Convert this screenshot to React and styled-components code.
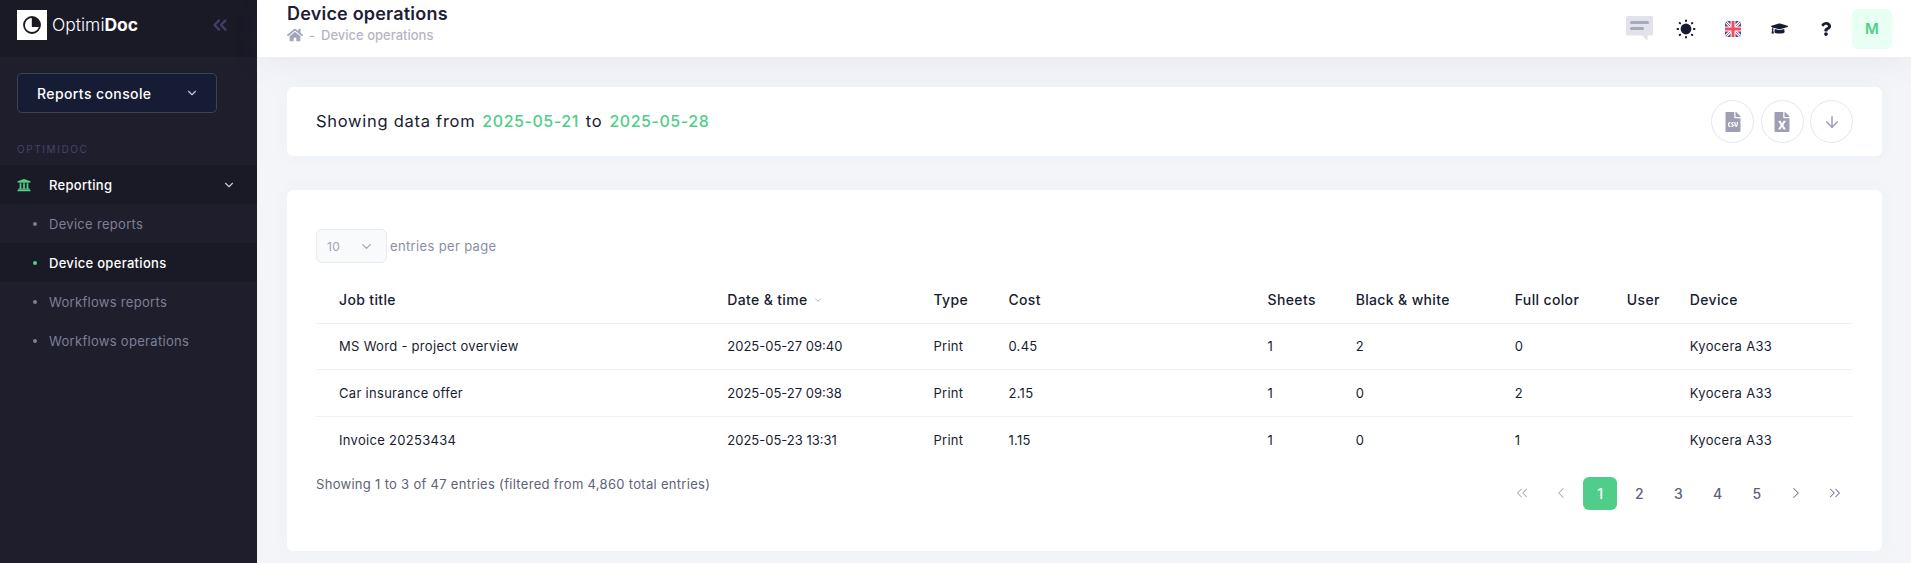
import React from 'react';
import styled, { createGlobalStyle } from 'styled-components';
import { FaHome, FaUniversity, FaGraduationCap, FaQuestion, FaFileCsv, FaFileExcel } from 'react-icons/fa';
import { ChevronDown, ChevronsLeft, ChevronLeft, ChevronRight, ChevronsRight, ArrowDown } from 'lucide-react';

const Global = createGlobalStyle`
  html, body { margin: 0; height: 100%; }
  body {
    font-family: Inter, "Open Sans", sans-serif;
    font-size: 13px;
    color: #181c32;
    background: #f3f5f9;
    overflow: hidden;
  }
  * { box-sizing: border-box; }
`;

const Page = styled.div`
  display: flex;
  height: 563px;
`;

const Sidebar = styled.aside`
  width: 257px;
  flex-shrink: 0;
  background: #1e1e2d;
`;

const Brand = styled.div`
  height: 57px;
  background: #1a1a27;
  display: flex;
  align-items: center;
  justify-content: space-between;
  padding: 0 26px 8px 17px;
`;

const Logo = styled.div`
  display: flex;
  align-items: center;
  gap: 5px;
  color: #fff;
  font-size: 17.5px;
  font-weight: 300;
  b { font-weight: 700; }
`;

const LogoMark = styled.div`
  width: 30px;
  height: 30px;
  background: #fff;
  display: flex;
  align-items: center;
  justify-content: center;
`;

const ConsoleButton = styled.button`
  width: 200px;
  height: 40px;
  margin: 16px 0 0 17px;
  padding: 0 17px 0 19px;
  display: flex;
  align-items: center;
  justify-content: space-between;
  background: #151c34;
  border: 1px solid #3f4254;
  border-radius: 5px;
  color: #fff;
  font: 500 14px Inter, sans-serif;
  letter-spacing: 0.4px;
`;

const SectionLabel = styled.div`
  margin: 30px 0 0 17px;
  height: 22px;
  line-height: 12px;
  font-size: 10px;
  letter-spacing: 1.6px;
  color: #44446a;
`;

const MenuRow = styled.div`
  height: 39px;
  display: flex;
  align-items: center;
  padding-left: ${p => (p.$sub ? '33px' : '17px')};
  background: ${p => (p.$active ? '#1a1a27' : 'transparent')};
  color: ${p => (p.$active ? '#fff' : '#7e7e96')};
  font-weight: ${p => (p.$bold ? 500 : 400)};
  letter-spacing: 0.3px;
`;

const Bullet = styled.span`
  width: 4px;
  height: 4px;
  border-radius: 50%;
  margin-right: 12px;
  background: ${p => (p.$active ? '#50cd89' : '#7e7e96')};
`;

const MenuIcon = styled.span`
  width: 32px;
  display: flex;
  color: #50cd89;
`;

const MenuChevron = styled.span`
  margin-left: auto;
  margin-right: 21px;
  display: flex;
  color: #c8c8d4;
`;

const Main = styled.main`
  flex: 1;
  min-width: 0;
`;

const TopBar = styled.header`
  height: 57px;
  background: #fff;
  padding: 0 19px 12px 30px;
  display: flex;
  align-items: center;
  justify-content: space-between;
  box-shadow: 0 10px 30px rgba(82, 80, 120, 0.06);
`;

const Title = styled.h1`
  margin: 0;
  font-size: 18px;
  line-height: 24px;
  font-weight: 600;
  letter-spacing: 0.2px;
  color: #1e2035;
`;

const Crumbs = styled.div`
  display: flex;
  align-items: center;
  gap: 6px;
  margin-top: 1px;
  font-size: 13px;
  font-weight: 500;
  color: #b5b5c8;
  svg { color: #a1a5b7; }
`;

const TopIcons = styled.div`
  display: flex;
  gap: 6.5px;
  margin-top: 12px;
`;

const TopIcon = styled.div`
  width: 40px;
  height: 40px;
  display: flex;
  align-items: center;
  justify-content: center;
  color: #181c32;
`;

const Avatar = styled(TopIcon)`
  background: #e8fff3;
  border-radius: 6px;
  color: #50cd89;
  font-size: 15px;
  font-weight: 600;
`;

const Content = styled.div`
  padding: 30px 29px 0 30px;
  display: flex;
  flex-direction: column;
  gap: 34px;
`;

const Card = styled.section`
  background: #fff;
  border-radius: 6px;
  box-shadow: 0 0 20px rgba(76, 87, 125, 0.03);
`;

const RangeCard = styled(Card)`
  height: 69px;
  padding: 0 29px;
  display: flex;
  align-items: center;
  justify-content: space-between;
`;

const RangeText = styled.div`
  font-size: 16.5px;
  display: flex;
  align-items: baseline;
  gap: 7px;
  margin-top: -2px;
  color: #181c32;
  letter-spacing: 0.72px;
  span { color: #50cd89; font-size: 16px; font-weight: 500; letter-spacing: 0.55px; }
`;

const RoundButtons = styled.div`
  display: flex;
  gap: 6.5px;
`;

const RoundButton = styled.div`
  width: 43px;
  height: 43px;
  border: 1px solid #e4e6ef;
  border-radius: 50%;
  display: flex;
  align-items: center;
  justify-content: center;
  color: #9e9fb5;
`;

const TableCard = styled(Card)`
  height: 361px;
  padding: 39px 29px 0;
`;

const PerPage = styled.div`
  display: flex;
  align-items: center;
  gap: 3px;
  color: #8b8ea3;
  letter-spacing: 0.35px;
`;

const PerPageSelect = styled.div`
  width: 71px;
  height: 34px;
  padding: 0 12px 0 10px;
  display: flex;
  align-items: center;
  justify-content: space-between;
  background: #f8fafc;
  border: 1px solid #e6eaf1;
  border-radius: 6px;
  font-size: 12px;
  color: #a1a5b7;
`;

const Table = styled.table`
  width: 100%;
  margin-top: 13px;
  border-collapse: collapse;
  table-layout: fixed;
`;

const Th = styled.th`
  height: 47px;
  padding: 0 0 0 ${p => (p.$first ? '23px' : '0')};
  text-align: left;
  font-size: 14px;
  font-weight: 500;
  letter-spacing: 0.35px;
  border-bottom: 1px solid #eff2f5;
  color: #181c32;
`;

const Td = styled.td`
  height: 46.5px;
  padding: 0 0 0 ${p => (p.$first ? '23px' : '0')};
  letter-spacing: ${p => (p.$date ? '0' : '0.3px')};
  color: #181c32;
`;

const Tr = styled.tr`
  &:not(:last-child) td { border-bottom: 1px solid #eff2f5; }
`;

const TableFooter = styled.div`
  display: flex;
  justify-content: space-between;
  align-items: flex-start;
  margin-top: 1px;
`;

const Summary = styled.div`
  margin-top: 12px;
  color: #5e6278;
  letter-spacing: 0.3px;
`;

const Pagination = styled.div`
  display: flex;
  gap: 5.6px;
  margin: 13px 1px 0 0;
`;

const PageItem = styled.div`
  width: 33.6px;
  height: 33px;
  display: flex;
  align-items: center;
  justify-content: center;
  border-radius: 6px;
  font-size: 14px;
  font-weight: 500;
  background: ${p => (p.$active ? '#50cd89' : 'transparent')};
  color: ${p => (p.$active ? '#fff' : p.$muted ? '#a9a9ba' : p.$arrow ? '#6d7189' : '#5e6278')};
`;

const PieLogo = () => (
  <svg width="20" height="20" viewBox="0 0 20 20" fill="none" stroke="#1a1a27" strokeWidth="1.8">
    <circle cx="10" cy="10" r="8" />
    <path d="M9.800 2.200A8 8 0 0 1 18 12H9.800z" fill="#1a1a27" stroke="none" />
  </svg>
);

const SunIcon = () => (
  <svg width="20" height="20" viewBox="0 0 20 20" fill="#181c32">
    <circle cx="10" cy="10" r="5.4" />
    <rect x="9" y="0.5" width="2" height="2.6" rx="1" />
    <rect x="9" y="16.9" width="2" height="2.6" rx="1" />
    <rect x="0.5" y="9" width="2.6" height="2" rx="1" />
    <rect x="16.9" y="9" width="2.6" height="2" rx="1" />
    <rect x="2.6" y="3.2" width="2.6" height="2" rx="1" transform="rotate(45 3.9 4.2)" />
    <rect x="14.8" y="3.2" width="2.6" height="2" rx="1" transform="rotate(-45 16.1 4.2)" />
    <rect x="2.6" y="14.8" width="2.6" height="2" rx="1" transform="rotate(-45 3.9 15.8)" />
    <rect x="14.8" y="14.8" width="2.6" height="2" rx="1" transform="rotate(45 16.1 15.8)" />
  </svg>
);

const ChatIcon = () => (
  <svg width="27" height="25" viewBox="0 0 27 25">
    <path d="M1.5 0h24A1.5 1.5 0 0 1 27 1.5V18a1.5 1.5 0 0 1-1.5 1.500H21.500V24.500L16 19.500H1.500A1.500 1.500 0 0 1 0 18V1.500A1.500 1.500 0 0 1 1.500 0z" fill="#e1e2ea" />
    <rect x="4" y="5" width="19" height="3" rx="1.500" fill="#a6a8bb" />
    <rect x="4" y="11" width="14" height="3" rx="1.500" fill="#a6a8bb" />
  </svg>
);

const FlagIcon = () => (
  <svg width="16" height="16" viewBox="0 0 16 16">
    <defs>
      <clipPath id="flag-clip"><rect width="16" height="16" rx="3" /></clipPath>
    </defs>
    <g clipPath="url(#flag-clip)">
      <rect width="16" height="16" fill="#41479b" />
      <path d="M0 0l16 16M16 0L0 16" stroke="#fff" strokeWidth="3" />
      <path d="M0 0l16 16M16 0L0 16" stroke="#ef4f5f" strokeWidth="1" />
      <path d="M8 0v16M0 8h16" stroke="#fff" strokeWidth="5" />
      <path d="M8 0v16M0 8h16" stroke="#ef4f5f" strokeWidth="3" />
    </g>
  </svg>
);

const subItems = [
  { label: 'Device reports' },
  { label: 'Device operations', active: true },
  { label: 'Workflows reports' },
  { label: 'Workflows operations' },
];

const columns = [
  { label: 'Job title', width: 411 },
  { label: 'Date & time', width: 206, sorted: true },
  { label: 'Type', width: 75 },
  { label: 'Cost', width: 259 },
  { label: 'Sheets', width: 88 },
  { label: 'Black & white', width: 159 },
  { label: 'Full color', width: 112 },
  { label: 'User', width: 63 },
  { label: 'Device', width: 163 },
];

const rows = [
  ['MS Word - project overview', '2025-05-27 09:40', 'Print', '0.45', '1', '2', '0', '', 'Kyocera A33'],
  ['Car insurance offer', '2025-05-27 09:38', 'Print', '2.15', '1', '0', '2', '', 'Kyocera A33'],
  ['Invoice 20253434', '2025-05-23 13:31', 'Print', '1.15', '1', '0', '1', '', 'Kyocera A33'],
];

export default function App() {
  return (
    <Page>
      <Global />
      <Sidebar>
        <Brand>
          <Logo>
            <LogoMark><PieLogo /></LogoMark>
            <span>Optimi<b>Doc</b></span>
          </Logo>
          <ChevronsLeft size={22} color="#3f3f66" strokeWidth={2.5} />
        </Brand>
        <ConsoleButton>
          Reports console
          <ChevronDown size={14} color="#c8c8d4" />
        </ConsoleButton>
        <SectionLabel>OPTIMIDOC</SectionLabel>
        <MenuRow $active $bold>
          <MenuIcon><FaUniversity size={14} /></MenuIcon>
          Reporting
          <MenuChevron><ChevronDown size={14} /></MenuChevron>
        </MenuRow>
        {subItems.map(item => (
          <MenuRow key={item.label} $sub $active={item.active} $bold={item.active}>
            <Bullet $active={item.active} />
            {item.label}
          </MenuRow>
        ))}
      </Sidebar>
      <Main>
        <TopBar>
          <div>
            <Title>Device operations</Title>
            <Crumbs>
              <FaHome size={16} />
              <span>-</span>
              <span>Device operations</span>
            </Crumbs>
          </div>
          <TopIcons>
            <TopIcon><ChatIcon /></TopIcon>
            <TopIcon><SunIcon /></TopIcon>
            <TopIcon><FlagIcon /></TopIcon>
            <TopIcon><FaGraduationCap size={17} /></TopIcon>
            <TopIcon><FaQuestion size={14} /></TopIcon>
            <Avatar>M</Avatar>
          </TopIcons>
        </TopBar>
        <Content>
          <RangeCard>
            <RangeText>
              Showing data from <span>2025-05-21</span> to <span>2025-05-28</span>
            </RangeText>
            <RoundButtons>
              <RoundButton><FaFileCsv size={20} /></RoundButton>
              <RoundButton><FaFileExcel size={20} /></RoundButton>
              <RoundButton><ArrowDown size={18} /></RoundButton>
            </RoundButtons>
          </RangeCard>
          <TableCard>
            <PerPage>
              <PerPageSelect>10 <ChevronDown size={15} /></PerPageSelect>
              entries per page
            </PerPage>
            <Table>
              <colgroup>
                {columns.map(c => <col key={c.label} width={c.width} />)}
              </colgroup>
              <thead>
                <tr>
                  {columns.map((c, i) => (
                    <Th key={c.label} $first={i === 0}>
                      {c.label}
                      {c.sorted && <ChevronDown size={10} color="#a1a5b7" style={{ marginLeft: 5 }} />}
                    </Th>
                  ))}
                </tr>
              </thead>
              <tbody>
                {rows.map(row => (
                  <Tr key={row[0]}>
                    {row.map((cell, i) => <Td key={i} $first={i === 0} $date={i === 1}>{cell}</Td>)}
                  </Tr>
                ))}
              </tbody>
            </Table>
            <TableFooter>
              <Summary>Showing 1 to 3 of 47 entries (filtered from 4,860 total entries)</Summary>
              <Pagination>
                <PageItem $muted><ChevronsLeft size={18} strokeWidth={1.4} /></PageItem>
                <PageItem $muted><ChevronLeft size={18} strokeWidth={1.4} /></PageItem>
                <PageItem $active>1</PageItem>
                <PageItem>2</PageItem>
                <PageItem>3</PageItem>
                <PageItem>4</PageItem>
                <PageItem>5</PageItem>
                <PageItem $arrow><ChevronRight size={18} strokeWidth={1.4} /></PageItem>
                <PageItem $arrow><ChevronsRight size={18} strokeWidth={1.4} /></PageItem>
              </Pagination>
            </TableFooter>
          </TableCard>
        </Content>
      </Main>
    </Page>
  );
}
